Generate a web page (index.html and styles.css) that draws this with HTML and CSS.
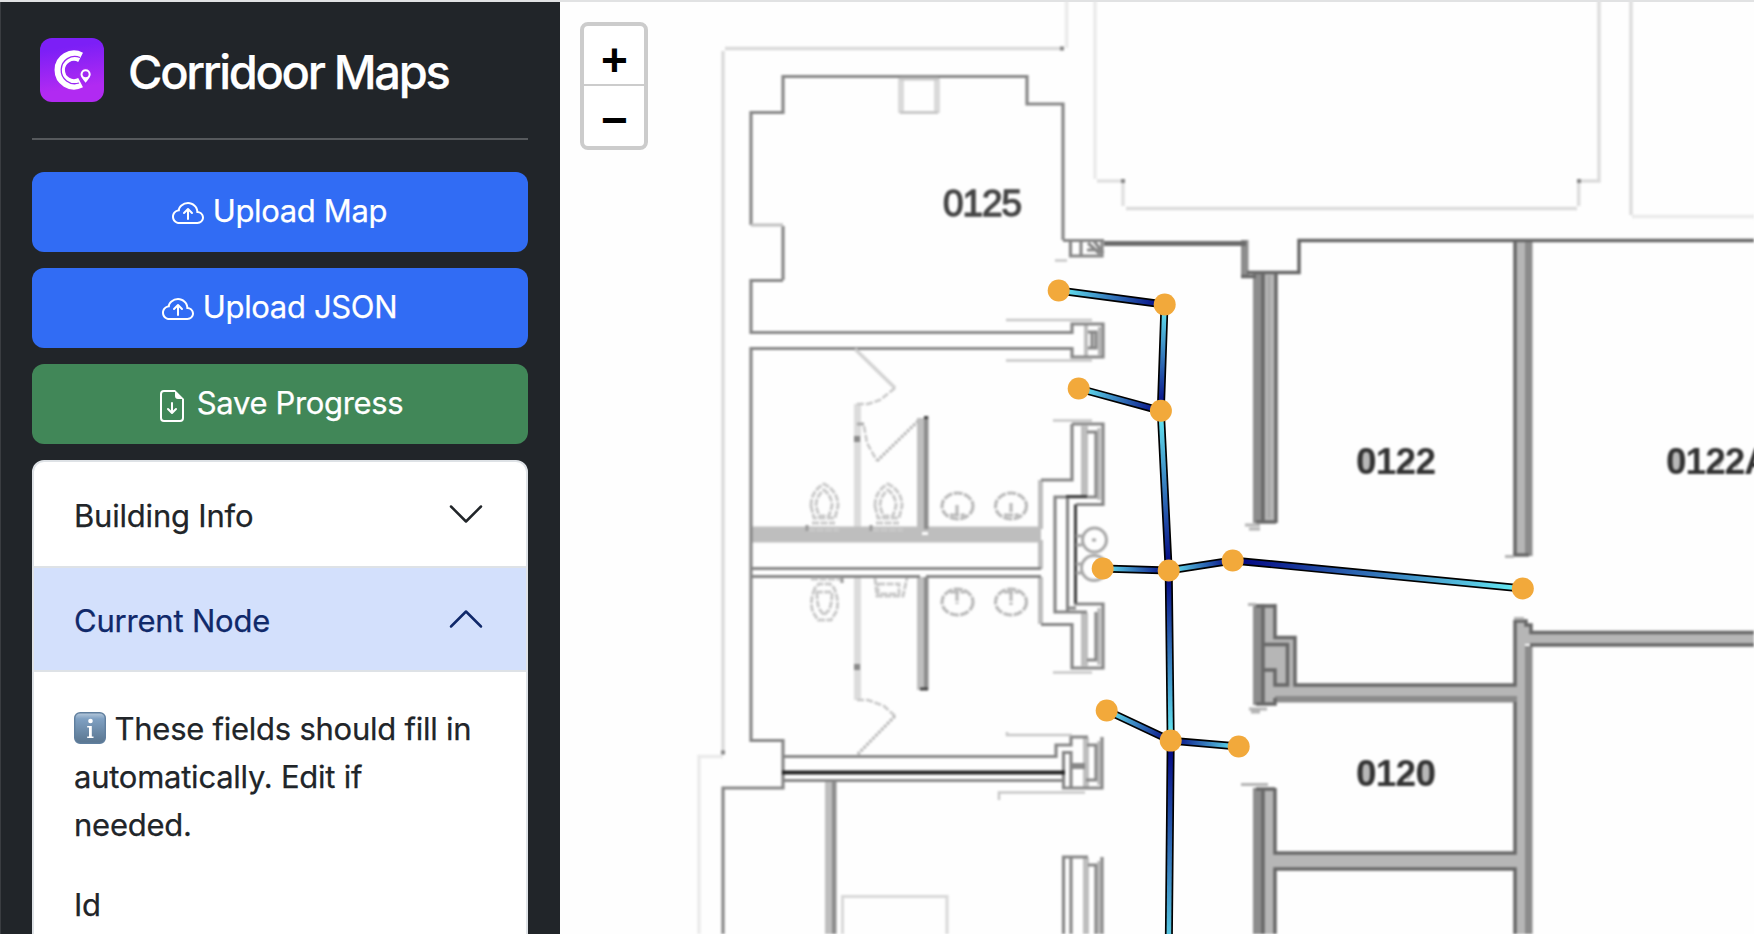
FILE: index.html
```html
<!DOCTYPE html>
<html lang="en">
<head>
<meta charset="utf-8">
<title>Corridoor Maps</title>
<link rel="stylesheet" href="styles.css">
</head>
<body>
<div class="app">
  <aside class="sidebar">
    <header class="brand">
      <svg class="brand-logo" viewBox="0 0 64 64">
        <defs><linearGradient id="logoBg" x1="0" y1="0" x2="0.15" y2="1"><stop offset="0.2" stop-color="#7c1ff6"/><stop offset="0.85" stop-color="#b12af2"/></linearGradient></defs>
        <rect width="64" height="64" rx="12" fill="url(#logoBg)"/>
        <path d="M41.800 19.300A14.300 14.300 0 1 0 41.800 44.700" transform="translate(-1.200 0)" fill="none" stroke="#fff" stroke-width="10.400"/>
        <path d="M40 19.500A13.600 13.600 0 1 0 39 45" fill="none" stroke="#9a26f4" stroke-width="1.300"/>
        <path d="M45.600 30.500a5.800 5.800 0 0 0-5.800 5.800c0 3.600 3.400 6.200 5.800 9.900 2.400-3.700 5.800-6.300 5.800-9.900a5.800 5.800 0 0 0-5.800-5.800z" fill="#fff" stroke="#a128f3" stroke-width="1.400"/>
        <circle cx="45.600" cy="36.300" r="3" fill="#a128f3"/>
      </svg>
      <h1 class="brand-name">Corridoor Maps</h1>
    </header>
    <hr class="rule">
    <div class="actions">
      <button class="btn btn-primary">
        <svg class="icon" viewBox="0 0 16 16"><path fill-rule="evenodd" d="M7.646 5.146a.5.5 0 0 1 .708 0l2 2a.5.5 0 0 1-.708.708L8.500 6.707V10.500a.5.5 0 0 1-1 0V6.707L6.354 7.854a.5.5 0 1 1-.708-.708z"/><path d="M4.406 3.342A5.530 5.530 0 0 1 8 2c2.690 0 4.923 2 5.166 4.579C14.758 6.804 16 8.137 16 9.773 16 11.569 14.502 13 12.687 13H3.781C1.708 13 0 11.366 0 9.318c0-1.763 1.266-3.223 2.942-3.593.143-.863.698-1.723 1.464-2.383m.653.757c-.757.653-1.153 1.440-1.153 2.056v.448l-.445.049C2.064 6.805 1 7.952 1 9.318 1 10.785 2.230 12 3.781 12h8.906C13.980 12 15 10.988 15 9.773c0-1.216-1.020-2.228-2.313-2.228h-.5v-.5C12.188 4.825 10.328 3 8 3a4.530 4.530 0 0 0-2.941 1.100z"/></svg>
        <span class="label">Upload Map</span>
      </button>
      <button class="btn btn-primary">
        <svg class="icon" viewBox="0 0 16 16"><path fill-rule="evenodd" d="M7.646 5.146a.5.5 0 0 1 .708 0l2 2a.5.5 0 0 1-.708.708L8.500 6.707V10.500a.5.5 0 0 1-1 0V6.707L6.354 7.854a.5.5 0 1 1-.708-.708z"/><path d="M4.406 3.342A5.530 5.530 0 0 1 8 2c2.690 0 4.923 2 5.166 4.579C14.758 6.804 16 8.137 16 9.773 16 11.569 14.502 13 12.687 13H3.781C1.708 13 0 11.366 0 9.318c0-1.763 1.266-3.223 2.942-3.593.143-.863.698-1.723 1.464-2.383m.653.757c-.757.653-1.153 1.440-1.153 2.056v.448l-.445.049C2.064 6.805 1 7.952 1 9.318 1 10.785 2.230 12 3.781 12h8.906C13.980 12 15 10.988 15 9.773c0-1.216-1.020-2.228-2.313-2.228h-.5v-.5C12.188 4.825 10.328 3 8 3a4.530 4.530 0 0 0-2.941 1.100z"/></svg>
        <span class="label">Upload JSON</span>
      </button>
      <button class="btn btn-success">
        <svg class="icon" viewBox="0 0 16 16"><path d="M8.500 6.500a.5.5 0 0 0-1 0v3.793L6.354 9.146a.5.5 0 1 0-.708.708l2 2a.5.5 0 0 0 .708 0l2-2a.5.5 0 0 0-.708-.708L8.500 10.293z"/><path d="M14 14V4.500L9.500 0H4a2 2 0 0 0-2 2v12a2 2 0 0 0 2 2h8a2 2 0 0 0 2-2M9.500 3A1.500 1.500 0 0 0 11 4.500h2V14a1 1 0 0 1-1 1H4a1 1 0 0 1-1-1V2a1 1 0 0 1 1-1h5.500z"/></svg>
        <span class="label">Save Progress</span>
      </button>
    </div>
    <section class="accordion">
      <div class="acc-head">
        <span class="acc-title">Building Info</span>
        <svg class="chevron" viewBox="0 0 16 16"><path d="m2 5 6 6 6-6"/></svg>
      </div>
      <div class="acc-head acc-open">
        <span class="acc-title">Current Node</span>
        <svg class="chevron" viewBox="0 0 16 16"><path d="m2 11 6-6 6 6"/></svg>
      </div>
      <div class="acc-body">
        <p class="hint"><svg class="info" viewBox="0 0 32 32"><defs><linearGradient id="infoBg" x1="0" y1="0" x2="0" y2="1"><stop offset="0" stop-color="#b9cbdc"/><stop offset="0.200" stop-color="#7fa0c2"/><stop offset="1" stop-color="#59758f"/></linearGradient></defs><rect x="0.700" y="0.700" width="30.600" height="30.600" rx="5.500" fill="url(#infoBg)" stroke="#607f9e" stroke-width="1.400"/><circle cx="16.500" cy="9" r="2.300" fill="#fff"/><path d="M13.200 14h4.600v10.500h1.700v1.400h-6.300v-1.400H15v-9.100h-1.800z" fill="#fff"/></svg> These fields should fill in<br>automatically. Edit if<br>needed.</p>
        <div class="field-label">Id</div>
      </div>
    </section>
  </aside>
  <main class="map">
    <svg class="plan" viewBox="560 0 1194 934">
      <defs>
        <filter id="soft" filterUnits="userSpaceOnUse" x="560" y="0" width="1194" height="934" color-interpolation-filters="sRGB"><feGaussianBlur stdDeviation="0.950"/></filter>
        <linearGradient id="e1" gradientUnits="userSpaceOnUse" x1="1058.700" y1="290.500" x2="1164.500" y2="304.500"><stop offset="0" class="lo"/><stop offset="1" class="hi"/></linearGradient>
        <linearGradient id="e2" gradientUnits="userSpaceOnUse" x1="1164.500" y1="304.500" x2="1160.800" y2="410.800"><stop offset="0" class="lo"/><stop offset="1" class="hi"/></linearGradient>
        <linearGradient id="e3" gradientUnits="userSpaceOnUse" x1="1078.700" y1="388.500" x2="1160.800" y2="410.800"><stop offset="0" class="lo"/><stop offset="1" class="hi"/></linearGradient>
        <linearGradient id="e4" gradientUnits="userSpaceOnUse" x1="1160.800" y1="410.800" x2="1168.700" y2="570.500"><stop offset="0" class="lo"/><stop offset="1" class="hi"/></linearGradient>
        <linearGradient id="e5" gradientUnits="userSpaceOnUse" x1="1102.700" y1="568.500" x2="1168.700" y2="570.500"><stop offset="0" class="lo"/><stop offset="1" class="hi"/></linearGradient>
        <linearGradient id="e6" gradientUnits="userSpaceOnUse" x1="1168.700" y1="570.500" x2="1232.700" y2="560.500"><stop offset="0" class="lo"/><stop offset="1" class="hi"/></linearGradient>
        <linearGradient id="e7" gradientUnits="userSpaceOnUse" x1="1522.700" y1="588.500" x2="1232.700" y2="560.500"><stop offset="0" class="lo"/><stop offset="1" class="hi"/></linearGradient>
        <linearGradient id="e8" gradientUnits="userSpaceOnUse" x1="1170.700" y1="740.700" x2="1168.700" y2="570.500"><stop offset="0" class="lo"/><stop offset="1" class="hi"/></linearGradient>
        <linearGradient id="e9" gradientUnits="userSpaceOnUse" x1="1106.700" y1="710.500" x2="1170.700" y2="740.700"><stop offset="0" class="lo"/><stop offset="1" class="hi"/></linearGradient>
        <linearGradient id="e10" gradientUnits="userSpaceOnUse" x1="1238.700" y1="746.500" x2="1170.700" y2="740.700"><stop offset="0" class="lo"/><stop offset="1" class="hi"/></linearGradient>
        <linearGradient id="e11" gradientUnits="userSpaceOnUse" x1="1168.500" y1="975" x2="1170.700" y2="740.700"><stop offset="0" class="lo"/><stop offset="1" class="hi"/></linearGradient>
      </defs>
      <g filter="url(#soft)">
        <!-- site outline -->
        <g class="faint">
          <path d="M723 51V752M725 48.500H1062" stroke="#dadada"/>
          <path d="M1066.600 0V48M1095 0V179M1632 216.500H1754M723 756.500H699V934" stroke="#eaeaea"/>
          <path d="M1097 181H1122M1123 181V206" stroke="#e0e0e0"/>
          <path d="M1126 208.500H1577M1578.700 206V181H1599V0M1631 0V215" stroke="#dcdcdc"/>
        </g>
        <path class="dots" d="M1060 48.500h4M1121 181h4M1577 181h4M721 752.500h4"/>
        <!-- partitions and wall fills -->
        <path fill="#dcdcdc" d="M854 404h7v126h-7zM854 577h7v123h-7z"/>
        <path fill="#bebebe" d="M750 526.500h291v16H750zM917 418h8v110h-8zM917 577h8v113h-8zM825 781h8v153h-8zM1038 480h5v49h-5zM1038 540h5v29h-5zM1038 577h5v47h-5zM1081 426h7v71h-7zM1081 613h7v53h-7zM1083 738h6v50h-6zM1083 858h6v76h-6zM1084 325h4v32h-4z"/>
        <path fill="#8d8d8d" d="M924 416h4.500v113H924zM924 577h4.500v113H924zM832 781h4.500v153H832zM1241 240h7.500v38H1241zM1253 273h10v250h-10zM1253 604h10v101h-10zM1253 788h10v146h-10z"/>
        <path fill="#b6b6b6" d="M1264 273h12v250h-12zM1515 240h10v315h-10zM1515 622h10v312h-10zM1264 604h11v33h-11zM1264 637h31v48h-31zM1264 685h252v12h-252zM1264 697h11v8h-11zM1264 788h11v146h-11zM1272 853h244v16h-244zM1525 633h229v11h-229zM1525 625h7v9h-7z"/>
        <path fill="#8b8b8b" d="M1525 240h7.500v316H1525zM1525 646h7.500v288H1525zM1275 696h242v6.500h-242z"/>
        <path fill="#fefefe" d="M1297 646h216v37h-216zM922 532h6v3h-6z"/>
        <!-- room 0125 -->
        <g class="wall">
          <path d="M1063 240V104H1027V76.500H783V112.500H751V225M783 226V280M783 280.500H751V332.500H1072V324H1103V357H1072V348.500H751V740.500H783V788H723V934"/>
          <path d="M751 225H783" stroke="#c3c3c3"/>
          <path d="M1063 240.500H1104M1070.500 241V256H1102V241"/>
          <path d="M1081 242V256M1088 243L1100 254M1087 250H1100M1094 241L1103 253" stroke="#888"/>
          <path d="M1088 332H1096V348H1088M1092 332V348"/>
          <path d="M1072 424V480H1041M1072 424H1103V504.500H1076M1087 432H1096V497H1055V612H1087M1067.500 497V612M1067 608H1076"/>
          <path d="M1075.500 504V604H1103V668H1072V624.500H1041M1096 612V660H1087"/>
          <path d="M783 756.500H1056V745H1071V737H1088M1102 737V788H1063.500V752.500H1071V788M783 780.500H1064M1087 745H1096V780H1086"/>
          <path d="M1063.500 934V857H1088M1071 857V934M1088 865H1096V934M1102 857V934"/>
          <path d="M751 568.500H1041M751 576.500H920M926 576.500H1041"/>
        </g>
        <path fill="none" stroke="#b4b4b4" stroke-width="3" d="M1099.500 327V355M1099 428V500M1099 608V665M1099 741V785M1099 861V934"/>
        <path fill="none" stroke="#444" stroke-width="3" d="M1066 496.500H1087M1075.500 505V603M924 417.500h4M920 689h8"/>
        <path fill="none" stroke="#222" stroke-width="4" d="M782 772.500H1065"/>
        <path fill="none" stroke="#888" stroke-width="6" d="M1071 766H1085"/>
        <path fill="none" stroke="#8a8a8a" stroke-width="6" d="M854 439h6M854 667h6"/>
        <path fill="none" stroke="#aaa" stroke-width="3" d="M857 424h7"/>
        <!-- fixtures -->
        <path fill="none" stroke="#dadada" stroke-width="6" d="M901 78V113M937 78V113"/>
        <path fill="none" stroke="#c8c8c8" stroke-width="3" d="M900 79H938M900 112.500H938"/>
        <path fill="none" stroke="#d8d8d8" stroke-width="3" d="M842.500 934V896.500H947V934"/>
        <path fill="none" stroke="#c6c6c6" stroke-width="2.500" d="M1006 320H1092M1006 360.500H1092M1055 260.500H1067M1053 420.500H1092M1053 672.500H1092M1007 732V735H1072M999 800V792.500H1085"/>
        <path fill="none" stroke="#d2d2d2" stroke-width="3.500" d="M855 349L895 388"/>
        <path fill="none" stroke="#c6c6c6" stroke-width="2.500" stroke-dasharray="7 2" d="M895 388L880 400L868 404H856M864 426L867 443L877 461M857 700H868L884 706L895 716"/>
        <path fill="none" stroke="#b8b8b8" stroke-width="3" stroke-dasharray="3 1.200" d="M877 461L918 421M895 716L857 755"/>
        <g fill="none" stroke="#c9c9c9" stroke-width="3" stroke-dasharray="7 1.500">
          <path d="M811 506q0-15 13-22 14 7 14 22l-3 12h-21zM816 506q0-10 8-16 8 6 8 16l-3 10h-10zM808 530h31M812 523h23"/>
          <path d="M875 506q0-15 13-22 14 7 14 22l-3 12h-21zM880 506q0-10 8-16 8 6 8 16l-3 10h-10zM872 530h31M876 523h23"/>
          <path d="M811 579h32M815 588q-6 14-2 24l5 8h13l5-8q4-10-2-24l-4-4h-11zM817 592q0 14 3 18l4 5 5-5q3-6 3-18zM875 578l2 18h26l4-18M878 584h21v10h-21z"/>
        </g>
        <g fill="none" stroke="#bababa" stroke-width="3.200" stroke-dasharray="9 1.500">
          <ellipse cx="957.500" cy="506" rx="15.500" ry="13"/><ellipse cx="1011" cy="506" rx="15.500" ry="13"/>
          <ellipse cx="957.500" cy="602" rx="15.500" ry="13"/><ellipse cx="1011" cy="602" rx="15.500" ry="13"/>
          <path d="M950 515h15M957 505v10M1004 515h15M1011 503v12M950 592h15M957 592v12M1004 592h15M1011 592v13"/>
        </g>
        <g fill="none" stroke="#a8a8a8" stroke-width="3">
          <circle cx="1094.500" cy="540" r="12"/><circle cx="1094" cy="568" r="12.500"/><path d="M1076 536h6M1076 545h6M1076 564h6M1076 573h6M1092 540h4"/>
        </g>
        <path fill="none" stroke="#999" stroke-width="3" d="M807 525v6M871 525v6M842 577v6"/>
        <!-- east rooms -->
        <path fill="none" stroke="#6b6b6b" stroke-width="5" d="M1104 243.500H1246"/>
        <g fill="none" stroke="#686868" stroke-width="3.500">
          <path d="M1241 276.500H1256M1247 272.500H1299V240.500H1754M1263 273V522M1276 273V523M1256 522H1276"/>
          <path d="M1515 241V555M1515 620V685H1295V637.500H1275V604M1513 555H1529M1514 621H1526V625H1531V632.500H1754M1754 645H1530"/>
          <path d="M1263 604V705M1256 606H1275M1263 644.500H1287.500V685H1275V670H1263M1256 704H1275V698M1515 702V853H1275V788M1256 789H1275M1263 789V934M1515 934V869H1275V934"/>
        </g>
        <path fill="none" stroke="#a3a3a3" stroke-width="2" d="M1269 276V518"/>
        <path fill="none" stroke="#b4b4b4" stroke-width="3" d="M1245 525H1260M1249 529H1260M1505 556.500H1514M1248 604.500H1256M1249 709H1267M1251 712H1260M1241 784.500H1268M1514 618.500H1524"/>
      </g>
      <!-- room numbers -->
      <g class="room" filter="url(#soft)">
        <path fill="#b8b8b8" stroke="none" d="M1361 450h10v21h-10zM1402 466l8-8h5l-6 10zM1422 466l8-8h3l-6 10zM1671 450h10v21h-10zM1712 466l8-8h5l-6 10zM1732 466l8-8h3l-6 10zM1361 762h10v21h-10zM1402 778l8-8h5l-6 10zM1421 762h10v21h-10z"/>
        <text x="943" y="215.500" textLength="79" fill="#444">0125</text>
        <text class="dense" x="1356" y="473.500" textLength="80">0122</text>
        <text class="dense" x="1666" y="473.500" textLength="105">0122A</text>
        <text class="dense" x="1356" y="786" textLength="80">0120</text>
      </g>
      <!-- routes -->
      <g class="casing"><path d="M1058.700 290.500L1164.500 304.500L1160.800 410.800L1168.700 570.500L1170.700 740.700L1168.500 975M1078.700 388.500L1160.800 410.800M1102.700 568.500L1168.700 570.500L1232.700 560.500L1522.700 588.500M1106.700 710.500L1170.700 740.700L1238.700 746.500"/></g>
      <g class="edge">
        <path stroke="url(#e1)" d="M1058.700 290.500L1164.500 304.500"/><path stroke="url(#e2)" d="M1164.500 304.500L1160.800 410.800"/>
        <path stroke="url(#e3)" d="M1078.700 388.500L1160.800 410.800"/><path stroke="url(#e4)" d="M1160.800 410.800L1168.700 570.500"/>
        <path stroke="url(#e5)" d="M1102.700 568.500L1168.700 570.500"/><path stroke="url(#e6)" d="M1168.700 570.500L1232.700 560.500"/>
        <path stroke="url(#e7)" d="M1232.700 560.500L1522.700 588.500"/><path stroke="url(#e8)" d="M1168.700 570.500L1170.700 740.700"/>
        <path stroke="url(#e9)" d="M1106.700 710.500L1170.700 740.700"/><path stroke="url(#e10)" d="M1170.700 740.700L1238.700 746.500"/>
        <path stroke="url(#e11)" d="M1170.700 740.700L1168.500 975"/>
      </g>
      <g fill="#f2a93b">
        <circle cx="1058.700" cy="290.500" r="11"/><circle cx="1164.700" cy="304.500" r="11"/><circle cx="1078.700" cy="388.500" r="11"/><circle cx="1160.900" cy="410.700" r="11"/><circle cx="1102.700" cy="568.500" r="11"/><circle cx="1168.700" cy="570.500" r="11"/><circle cx="1232.700" cy="560.500" r="11"/><circle cx="1522.800" cy="588.500" r="11"/><circle cx="1106.700" cy="710.500" r="11"/><circle cx="1170.700" cy="740.600" r="11"/><circle cx="1238.700" cy="746.500" r="11"/>
      </g>
    </svg>
    <div class="zoom">
      <a class="zoom-btn">+</a>
      <a class="zoom-btn">&#x2212;</a>
    </div>
  </main>
</div>
</body>
</html>
```
FILE: styles.css
```css
* { box-sizing: border-box; }
body { margin: 0; font-family: Inter, "Liberation Sans", sans-serif; font-size: 32px; line-height: 48px; color: #212529; background: #fff; }
.app { display: flex; height: 934px; overflow: hidden; border-top: 2px solid #e1e2e3; }
.sidebar { flex: 0 0 560px; padding: 30px 32px 0 31px; background: #212529; border-left: 1px solid #3a3d41; overflow: hidden; -webkit-text-stroke: 0.25px currentColor; }
.brand { display: flex; align-items: center; height: 76px; padding-left: 8px; gap: 24px; }
.brand-logo { width: 64px; height: 64px; }
.brand-name { margin: 0; padding-top: 3px; font-size: 47px; font-weight: 500; color: #fff; letter-spacing: -2.3px; line-height: 58px; white-space: nowrap; }
.rule { height: 2px; margin: 30px 0 32px; border: 0; background: #56595c; }
.actions { display: flex; flex-direction: column; gap: 16px; }
.btn { display: flex; align-items: center; justify-content: center; gap: 9px; height: 80px; padding: 0 1px 2px 0; border: 0; border-radius: 12px; color: #fff; font: inherit; white-space: nowrap; }
.btn-primary { background: #316cf4; }
.btn-success { background: #418758; }
.icon { width: 32px; height: 32px; fill: #fff; margin-top: 6px; }
.label { font-size: 31px; letter-spacing: -0.35px; }
.accordion { margin-top: 16px; height: 600px; background: #fff; border: 2px solid #dee2e6; border-radius: 12px 12px 0 0; overflow: hidden; }
.acc-head { display: flex; align-items: center; justify-content: space-between; height: 104px; padding: 0 40px; }
.acc-open { height: 106px; color: #10296a; background: #d3e0fc; border-top: 2px solid #dee2e6; border-bottom: 2px solid #dee2e6; }
.acc-title { padding-top: 3px; font-size: 31px; letter-spacing: -0.2px; }
.chevron { width: 40px; height: 40px; fill: none; stroke: currentColor; stroke-width: 1; stroke-linecap: round; stroke-linejoin: round; }
.acc-body { padding: 33px 40px; font-size: 31px; letter-spacing: -0.25px; }
.hint { margin: 0 0 32px; white-space: nowrap; }
.info { width: 32px; height: 32px; vertical-align: -4px; }
.map { position: relative; flex: 1; overflow: hidden; background: #fefefe; }
.plan { display: block; width: 1194px; height: 934px; margin-top: -2px; }
.faint { fill: none; stroke-width: 3.4; }
.dots { fill: none; stroke: #888; stroke-width: 4; }
.wall { fill: none; stroke: #878787; stroke-width: 3.2; }
.room { font-family: "Liberation Sans", Arial, sans-serif; font-size: 37px; fill: #333; stroke: #444; stroke-width: 1.3; }
.dense { font-weight: 700; stroke: none; }
.casing { fill: none; stroke: #000; stroke-width: 8; }
.edge { stroke-width: 4.6; }
.lo { stop-color: #68eef5; }
.hi { stop-color: #000080; }
.zoom { position: absolute; left: 20px; top: 20px; width: 68px; height: 128px; border: 4px solid #ccc; border-radius: 8px; background: #fff; overflow: hidden; }
.zoom-btn { display: block; height: 60px; padding-left: 1px; font: bold 46px/68px "Liberation Sans", sans-serif; text-align: center; color: #000; }
.zoom-btn:first-child { border-bottom: 2px solid #ccc; }
```
